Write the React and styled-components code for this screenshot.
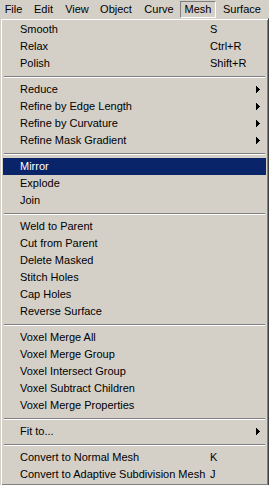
import React from "react";
import styled, { createGlobalStyle } from "styled-components";

const Global = createGlobalStyle`
  html, body {
    margin: 0;
    padding: 0;
    background: #d4d0c8;
    overflow: hidden;
  }
  body {
    font-family: "Liberation Sans", Arial, sans-serif;
    font-size: 11px;
    color: #000;
  }
`;

const Screen = styled.div`
  width: 269px;
  display: flex;
  flex-direction: column;
  background: #d4d0c8;
`;

const MenuBar = styled.div`
  display: flex;
  height: 18px;
  align-items: flex-start;
`;

const BarItem = styled.div`
  box-sizing: border-box;
  width: ${(p) => p.$w}px;
  height: 17px;
  margin-top: 1px;
  line-height: 15px;
  text-align: ${(p) => (p.$left ? "left" : "center")};
  padding-left: ${(p) => (p.$left ? 6 : 0)}px;
  white-space: nowrap;
  border: 1px solid transparent;
  ${(p) =>
    p.$pressed &&
    `border-color: #808080 #ffffff #ffffff #808080;`}
`;

const Dropdown = styled.div`
  box-sizing: border-box;
  width: 269px;
  border: 1px solid;
  border-color: #d4d0c8 #404040 #404040 #d4d0c8;
  box-shadow: inset 1px 1px 0 #ffffff, inset -1px -1px 0 #808080;
  padding: 2px;
  display: flex;
  flex-direction: column;
`;

const Row = styled.div`
  display: grid;
  grid-template-columns: 190px 1fr 10px;
  align-items: center;
  height: 17px;
  padding-left: 17px;
  line-height: 17px;
  white-space: nowrap;
  background: ${(p) => (p.$active ? "#0a246a" : "transparent")};
  color: ${(p) => (p.$active ? "#ffffff" : "#000000")};
`;

const Label = styled.span``;
const Shortcut = styled.span``;

const ArrowCell = styled.span`
  display: flex;
  align-items: center;
  height: 17px;
`;

const Separator = styled.div`
  height: 9px;
  display: flex;
  flex-direction: column;
  padding: 4px 1px 0;
  box-sizing: border-box;
  &::before {
    content: "";
    display: block;
    height: 0;
    border-top: 1px solid #808080;
    border-bottom: 1px solid #ffffff;
  }
`;

const Arrow = () => (
  <svg width="4" height="7" viewBox="0 0 4 7" shapeRendering="crispEdges">
    <rect x="0" y="0" width="1" height="7" fill="#000" />
    <rect x="1" y="1" width="1" height="5" fill="#000" />
    <rect x="2" y="2" width="1" height="3" fill="#000" />
    <rect x="3" y="3" width="1" height="1" fill="#000" />
  </svg>
);

const bar = [
  { t: "File", w: 27 },
  { t: "Edit", w: 33 },
  { t: "View", w: 34 },
  { t: "Object", w: 44 },
  { t: "Curve", w: 42 },
  { t: "Mesh", w: 36, pressed: true },
  { t: "Surface", w: 53, left: true },
];

const groups = [
  [
    { l: "Smooth", s: "S" },
    { l: "Relax", s: "Ctrl+R" },
    { l: "Polish", s: "Shift+R" },
  ],
  [
    { l: "Reduce", sub: true },
    { l: "Refine by Edge Length", sub: true },
    { l: "Refine by Curvature", sub: true },
    { l: "Refine Mask Gradient", sub: true },
  ],
  [{ l: "Mirror", active: true }, { l: "Explode" }, { l: "Join" }],
  [
    { l: "Weld to Parent" },
    { l: "Cut from Parent" },
    { l: "Delete Masked" },
    { l: "Stitch Holes" },
    { l: "Cap Holes" },
    { l: "Reverse Surface" },
  ],
  [
    { l: "Voxel Merge All" },
    { l: "Voxel Merge Group" },
    { l: "Voxel Intersect Group" },
    { l: "Voxel Subtract Children" },
    { l: "Voxel Merge Properties" },
  ],
  [{ l: "Fit to...", sub: true }],
  [
    { l: "Convert to Normal Mesh", s: "K" },
    { l: "Convert to Adaptive Subdivision Mesh", s: "J" },
  ],
];

export default function App() {
  return (
    <Screen>
      <Global />
      <MenuBar>
        {bar.map((b) => (
          <BarItem key={b.t} $w={b.w} $pressed={b.pressed} $left={b.left}>
            {b.t}
          </BarItem>
        ))}
      </MenuBar>
      <Dropdown>
        {groups.map((g, gi) => (
          <React.Fragment key={gi}>
            {gi > 0 && <Separator />}
            {g.map((it) => (
              <Row key={it.l} $active={it.active}>
                <Label>{it.l}</Label>
                <Shortcut>{it.s || ""}</Shortcut>
                <ArrowCell>{it.sub && <Arrow />}</ArrowCell>
              </Row>
            ))}
          </React.Fragment>
        ))}
      </Dropdown>
    </Screen>
  );
}
